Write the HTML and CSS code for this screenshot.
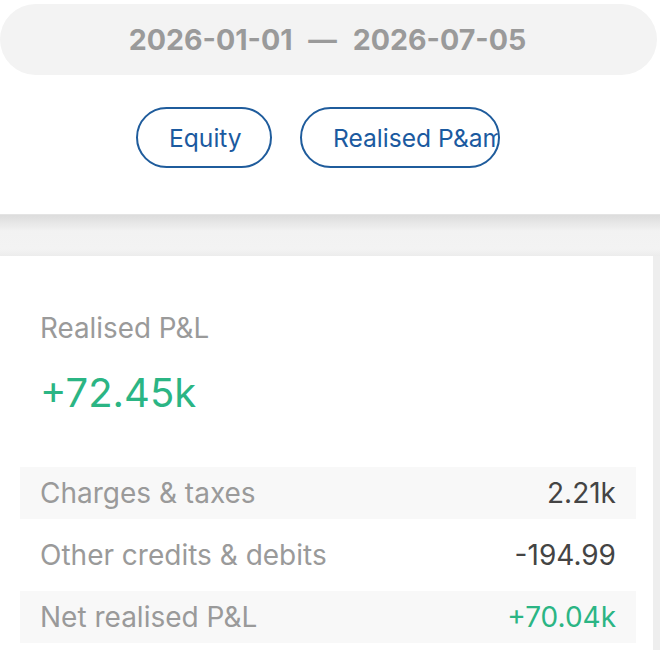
FILE: index.html
```html
<!DOCTYPE html>
<html>
<head>
<meta charset="utf-8">
<link rel="stylesheet" href="styles.css">
</head>
<body>
<div class="top">
  <div class="range">2026-01-01 <span class="dash">—</span> 2026-07-05</div>
  <div class="tabs">
    <button class="tab tab-equity">Equity</button>
    <button class="tab tab-pnl">Realised P&amp;amp;</button>
  </div>
</div>
<div class="band"></div>
<div class="card">
  <div class="label">Realised P&amp;L</div>
  <div class="amount">+72.45k</div>
  <div class="rows">
    <div class="row shaded"><span class="k">Charges &amp; taxes</span><span class="v">2.21k</span></div>
    <div class="row"><span class="k">Other credits &amp; debits</span><span class="v">-194.99</span></div>
    <div class="row shaded"><span class="k">Net realised P&amp;L</span><span class="v pos">+70.04k</span></div>
  </div>
</div>
</body>
</html>
```

FILE: styles.css
```css
* { box-sizing: border-box; }
html, body {
  margin: 0;
  padding: 0;
  background: #eeeeee;
  font-family: Inter, "Noto Sans", sans-serif;
  width: 660px;
  height: 650px;
  overflow: hidden;
}
.top {
  background: #ffffff;
  padding-top: 4px;
  height: 214px;
}
.range {
  width: 657px;
  height: 71px;
  border-radius: 36px;
  background: #f3f3f3;
  color: #9a9a9a;
  font-weight: 700;
  font-size: 28.6px;
  line-height: 71px;
  text-align: center;
  padding-right: 2px;
}
.dash { margin: 0 9px; }
.tabs {
  display: flex;
  gap: 28px;
  padding-left: 136px;
  margin-top: 32px;
}
.tab {
  height: 61px;
  border: 2px solid #1f5c9c;
  border-radius: 31px;
  background: #ffffff;
  color: #1b5aa0;
  font-family: Inter, "Noto Sans", sans-serif;
  font-size: 24.6px;
  padding: 0 0 0 31px;
  text-align: left;
  white-space: nowrap;
  overflow: hidden;
}
.tab-equity { width: 136px; }
.tab-pnl { width: 200px; }
.band {
  height: 42px;
  border-top: 1px solid #e4e4e4;
  background: linear-gradient(to bottom, #dcdcdc 0px, #f2f2f2 16px, #f3f3f3 34px, #ebebeb 42px);
}
.card {
  background: #ffffff;
  width: 653px;
  height: 394px;
  padding: 55px 17px 0 20px;
}
.label {
  color: #9a9a9a;
  font-size: 27.8px;
  line-height: 34px;
  padding-left: 20px;
}
.amount {
  color: #2bb584;
  font-size: 40px;
  line-height: 44px;
  margin-top: 26px;
  padding-left: 20px;
}
.rows {
  margin-top: 52px;
  display: flex;
  flex-direction: column;
  gap: 10px;
}
.row {
  height: 52px;
  display: flex;
  justify-content: space-between;
  align-items: center;
  padding: 0 20px;
  font-size: 28px;
}
.shaded { background: #f8f8f8; }
.k { color: #9a9a9a; }
.v { color: #444444; }
.v.pos { color: #2bb584; }
```
